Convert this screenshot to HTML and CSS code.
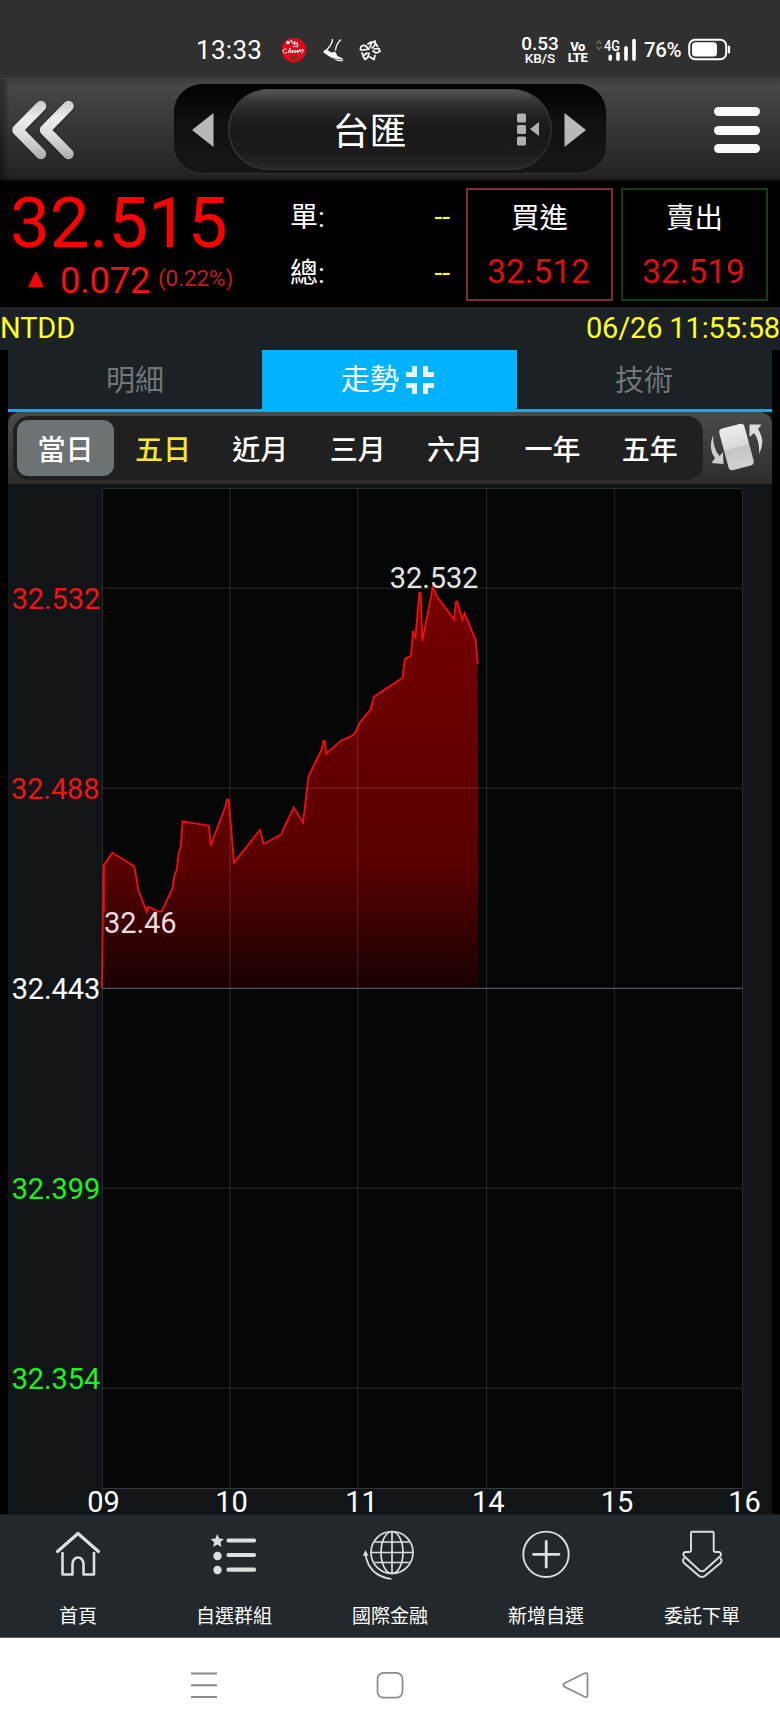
FILE: index.html
```html
<!DOCTYPE html>
<html lang="zh-Hant">
<head>
<meta charset="utf-8">
<title>台匯</title>
<link rel="stylesheet" href="styles.css">
</head>
<body>
<div class="statusbar">
  <span class="clock">13:33</span>
  <svg class="ic-badge" width="26" height="26" viewBox="0 0 26 26"><circle cx="13" cy="13" r="12.3" fill="#e1081c"/><path d="M9 4q2-2 2 1t3-1l-1 4q2-3 3-1M12 10q3-2 5 0M5.500 12Q1 12 2 15t4 0M7 16l2-5v5l2.500-3v3l2.500-3v3l2.500-3v3l2.500-4v3l3-3q1 3-2 5M16 5l1 4" fill="none" stroke="#fff" stroke-width="1"/><circle cx="7" cy="5.500" r="1.800" fill="#fff"/><rect x="10.500" y="18" width="6" height="4.500" fill="#6b3b16"/></svg>
  <svg class="ic-shoe" width="22" height="24" viewBox="0 0 22 24"><path d="M10.500 1Q10.500 6 5 11.500M19 1.500Q14 6 13.500 12.500" fill="none" stroke="#fff" stroke-width="1.300"/><path d="M4 11L1 14Q8 20 15 22.800L20 23.500Q22 22.500 20.500 20.500L15.500 18L13 13.500Q9 16 6.500 12.500Z" fill="#fff"/><path d="M1 15.500Q8 21 20.500 22" fill="none" stroke="#303030" stroke-width=".8"/></svg>
  <svg class="ic-fan" width="22" height="22" viewBox="0 0 22 22" fill="none" stroke="#fff" stroke-width="1.700" stroke-linejoin="round" stroke-linecap="round"><path d="M10 10L6 6.500Q1 6 1.500 11L5 11L10 10M11 8L12.500 4L16 2V6L13 9M15 10L20 9.500L21 12.500L17 14L14 12M8 14L4 17L6 20.500L9 18L10 14M11 18l4 2.500 1-4M9 5l3-2M17 5l1.500 2.500M3 14l1 2"/></svg>
  <div class="rate"><span class="rate-n">0.53</span><span class="rate-u">KB/S</span></div>
  <div class="volte"><span>Vo</span><span>LTE</span></div>
  <svg class="ic-signal" width="42" height="24" viewBox="0 0 42 24"><path d="M1.500 6L4 3l2.500 3M1.500 8.500L4 11.500l2.500-3" fill="none" stroke="#666" stroke-width="1.600"/><text x="9" y="12.500" class="fourg" textLength="16" lengthAdjust="spacingAndGlyphs">4G</text><path d="M15.200 18.200v3M23 15.500v5.700M31 9.700v11.500M39 2.500v18.700" stroke="#fff" stroke-width="3.600" stroke-linecap="round"/></svg>
  <span class="percent">76%</span>
  <svg class="ic-battery" width="43" height="23" viewBox="0 0 43 23"><rect x="1.200" y="1.700" width="37" height="19.500" rx="6" fill="none" stroke="#fff" stroke-width="2"/><rect x="4" y="4.300" width="25" height="14.300" rx="3.500" fill="#fff"/><path d="M41 8.500v6" stroke="#fff" stroke-width="2.200" stroke-linecap="round"/></svg>
</div>

<header class="header">
  <svg class="back" width="64" height="60" viewBox="0 0 64 60"><defs><linearGradient id="metal" x1="0" y1="0" x2="0" y2="60" gradientUnits="userSpaceOnUse"><stop offset="0" stop-color="#c8c8c8"/><stop offset=".3" stop-color="#ececec"/><stop offset=".6" stop-color="#dcdcdc"/><stop offset="1" stop-color="#aaa"/></linearGradient></defs><path d="M30 6L6.500 30L30 54M57.500 6L34 30L57.500 54" fill="none" stroke="url(#metal)" stroke-width="10.500" stroke-linecap="round" stroke-linejoin="round"/></svg>
  <div class="switcher">
    <svg width="22" height="34" viewBox="0 0 22 34"><path d="M0 17L21.500 0V34Z" fill="#b9b9b9"/></svg>
    <div class="pill">
      <span class="title">台匯</span>
      <svg class="dots" width="23" height="33" viewBox="0 0 23 33" fill="#b1b1b1"><rect width="9" height="9" rx="1.500" y=".5"/><rect width="9" height="9" rx="1.500" y="12"/><rect width="9" height="9" rx="1.500" y="23.500"/><path d="M13 16L22 9V23Z"/></svg>
    </div>
    <svg width="22" height="34" viewBox="0 0 22 34"><path d="M22 17L.5 0V34Z" fill="#b9b9b9"/></svg>
  </div>
  <div class="menu"><i></i><i></i><i></i></div>
</header>

<section class="quote">
  <div class="last">
    <div class="price">32.515</div>
    <div class="change"><svg width="16" height="16" viewBox="0 0 16 16"><path d="M8 0L16 16H0Z" fill="#f00"/></svg><span class="diff">0.072</span><span class="pct">(0.22%)</span></div>
  </div>
  <div class="volume">
    <div><span>單:</span><b>--</b></div>
    <div><span>總:</span><b>--</b></div>
  </div>
  <div class="side buy"><span>買進</span><em>32.512</em></div>
  <div class="side sell"><span>賣出</span><em>32.519</em></div>
</section>

<div class="info"><span>NTDD</span><span>06/26 11:55:58</span></div>

<main class="panel">
  <nav class="tabs">
    <div class="tab">明細</div>
    <div class="tab active">走勢<svg width="28" height="28" viewBox="0 0 28 28"><path d="M8.500 0V8.500H0M19.500 0V8.500H28M8.500 28V19.500H0M19.500 28V19.500H28" fill="none" stroke="#e9f8ff" stroke-width="5"/></svg></div>
    <div class="tab">技術</div>
  </nav>
  <div class="rangebar">
    <div class="ranges">
      <span class="on">當日</span><span class="yellow">五日</span><span>近月</span><span>三月</span><span>六月</span><span>一年</span><span>五年</span>
    </div>
    <svg class="rotate" width="54" height="52" viewBox="0 0 54 52"><defs><linearGradient id="card" x1="0" y1="0" x2="0" y2="1"><stop offset="0" stop-color="#eee"/><stop offset=".5" stop-color="#d8d8d8"/><stop offset=".52" stop-color="#c4c4c4"/><stop offset="1" stop-color="#d2d2d2"/></linearGradient></defs><rect x="14.500" y="4.500" width="26" height="43" rx="4" fill="url(#card)" transform="rotate(-15 27.500 26)"/><path d="M4 14Q-1 28 6 37L2.500 42L14.500 43L14 31L10.500 35Q4 28 4 14Z" fill="#ccc"/><path d="M40.500 3.500L52.500 3.500L49 8Q57 20 50 33Q51 20 45 12L40.500 16Z" fill="#ddd"/></svg>
  </div>
  <svg class="chart" width="764" height="1030" viewBox="8 484 764 1030">
    <defs><linearGradient id="area" x1="0" y1="80" x2="0" y2="1284" gradientUnits="userSpaceOnUse"><stop offset="0" stop-color="#760000"/><stop offset=".7" stop-color="#580000"/><stop offset="1" stop-color="#180203"/></linearGradient></defs>
    <rect x="102" y="488" width="641" height="1000" fill="#040606"/>
    <g transform="translate(90 560) scale(.33333)">
      <path fill="url(#area)" d="M36 1284L40 918L67 878L133 919L145 990L170 1055L175 1040L203 1054L215 1054L247 987L253 948L260 930L266 880L272 860L278 784L357 797L362 856L407 738L411 719L416 719L432 908L510 810L521 852L573 824L611 742L639 788L656 648L695 568L700 543L704 543L709 581L753 542L787 527L798 515L808 490L842 448L852 410L938 353L944 298L963 287L969 212L976 236L988 99L992 99L997 243L1029 80L1040 108L1092 178L1098 125L1102 125L1117 180L1124 160L1157 240L1163 312L1166 1284Z"/>
    </g>
    <path class="grid" d="M102.500 488.500H742.500V1488.500H102.500ZM230 488V1488M357.800 488V1488M486.500 488V1488M614.300 488V1488M102 588.200H742M102 788.200H742M102 1188.200H742M102 1388.200H742"/>
    <path d="M102 988.300H743" stroke="#4c5666" stroke-width="1.200"/>
    <g transform="translate(90 560) scale(.33333)">
      <path fill="none" stroke="#ee0e0e" stroke-width="5.500" d="M36 1284L40 918L67 878L133 919L145 990L170 1055L175 1040L203 1054L215 1054L247 987L253 948L260 930L266 880L272 860L278 784L357 797L362 856L407 738L411 719L416 719L432 908L510 810L521 852L573 824L611 742L639 788L656 648L695 568L700 543L704 543L709 581L753 542L787 527L798 515L808 490L842 448L852 410L938 353L944 298L963 287L969 212L976 236L988 99L992 99L997 243L1029 80L1040 108L1092 178L1098 125L1102 125L1117 180L1124 160L1157 240L1163 312"/>
      <path d="M42 918V1055" stroke="#ee0e0e" stroke-width="5"/>
    </g>
    <g class="axis">
      <g text-anchor="end">
        <text x="100.200" y="609" fill="#f01414">32.532</text>
        <text x="99.500" y="798.500" fill="#f01414">32.488</text>
        <text x="100.200" y="998.500" fill="#fff">32.443</text>
        <text x="100.200" y="1198.500" fill="#1ff01f">32.399</text>
        <text x="100.200" y="1388.500" fill="#1ff01f">32.354</text>
        <text x="478.300" y="588" fill="#e4e4e4">32.532</text>
      </g>
      <text x="104" y="933.300" fill="#ecdcdc">32.46</text>
      <g text-anchor="middle" fill="#fff">
        <text x="103.500" y="1512">09</text><text x="231.500" y="1512">10</text><text x="361.500" y="1512">11</text><text x="488.300" y="1512">14</text><text x="617" y="1512">15</text><text x="744.500" y="1512">16</text>
      </g>
    </g>
  </svg>
</main>

<nav class="bottom">
  <div class="item"><svg viewBox="0 0 50 50"><g fill="none" stroke="#dcdfe0" stroke-linejoin="round" stroke-linecap="round"><path d="M4.500 22.500L25 4.500L45.500 22.500" stroke-width="3.200"/><path d="M9.500 24V45.500H19.500V35A5.500 6.500 0 0 1 30.500 35V45.500H41V24" stroke-width="2.600"/></g></svg><span>首頁</span></div>
  <div class="item"><svg viewBox="0 0 50 50"><g fill="#dcdfe0"><path d="M8.300 5L10.200 9.500L15 10L11.400 13.200L12.500 18L8.300 15.500L4.100 18L5.200 13.200L1.600 10L6.400 9.500Z"/><circle cx="8.500" cy="27" r="4.200"/><circle cx="8.500" cy="41" r="4.200"/></g><path d="M19.500 11.500H45M19.500 26H45M19.500 40.700H45" stroke="#dcdfe0" stroke-width="4.200" stroke-linecap="round"/></svg><span>自選群組</span></div>
  <div class="item"><svg viewBox="0 0 50 50"><g fill="none" stroke="#dcdfe0" stroke-width="1.700"><circle cx="27" cy="23.500" r="21"/><ellipse cx="27" cy="23.500" rx="11" ry="21"/><path d="M27 2.500V44.500M6 23.500H48M9.500 13H44.500M9.500 33.500H44.500M.5 25.500Q4 47 26.500 50"/></g><path d="M.3 21L3.400 26.500L-2 27Z" fill="#dcdfe0"/></svg><span>國際金融</span></div>
  <div class="item"><svg viewBox="0 0 50 50"><circle cx="25" cy="25.300" r="22.700" fill="none" stroke="#dcdfe0" stroke-width="1.900"/><path d="M12.500 25.300H38M25.200 12.500V38" stroke="#dcdfe0" stroke-width="2.800" stroke-linecap="round"/></svg><span>新增自選</span></div>
  <div class="item"><svg viewBox="0 0 50 50"><g fill="none" stroke="#dcdfe0" stroke-width="1.900" stroke-linejoin="round"><path d="M15 2.700H35.500Q36.700 2.700 36.700 4V21.500Q36.700 23 38.500 23H42Q45 24 43.500 27L28 41Q25 43.500 22 41L7 27Q5 24 8.500 23H12Q14 23 14 21.500V4Q14 2.700 15 2.700Z"/><path d="M7 29Q5 32 7 34L21.500 46.500Q25 49.500 28.500 46.500L43.500 34Q45.500 32 43.500 29"/></g></svg><span>委託下單</span></div>
</nav>

<div class="sysbar">
  <svg width="28" height="28" viewBox="0 0 28 28"><path d="M1 2.500H27M1 14.300H27M1 26H27" stroke="#8a8a8a" stroke-width="2"/></svg>
  <svg width="28" height="28" viewBox="0 0 28 28"><rect x="1.500" y="1.800" width="25" height="24.800" rx="6" fill="none" stroke="#8a8a8a" stroke-width="1.700"/></svg>
  <svg width="28" height="28" viewBox="0 0 28 28"><path d="M2.500 12.300L22.500 2.300Q25.500 1.500 25.500 4V24Q25.500 27 22.500 25.800L2.500 15.700Q.2 14 2.500 12.300Z" fill="none" stroke="#8a8a8a" stroke-width="1.700"/></svg>
</div>
</body>
</html>
```

FILE: styles.css
```css
* { box-sizing: border-box; }
body { margin: 0; width: 780px; background: #000; color: #fff; font-family: Roboto, "Noto Sans CJK TC", sans-serif; }
svg { display: block; flex: none; }
.statusbar { height: 79px; background: linear-gradient(#303030 94%, #3b3b3b); display: flex; align-items: center; padding: 20px 48px 0 196px; }
.clock { font-size: 26px; letter-spacing: 0.3px; width: 85px; }
.ic-shoe { margin-left: 15px; }
.ic-fan { margin-left: 15px; }
.rate { margin-left: auto; width: 38px; display: flex; flex-direction: column; align-items: center; font-weight: 500; }
.rate-n { font-size: 19px; line-height: 15px; height: 14px; }
.rate-u { font-size: 13.500px; line-height: 16px; height: 14px; }
.volte { margin-left: 10px; width: 17px; display: flex; flex-direction: column; align-items: center; font-size: 13px; line-height: 12px; font-weight: 800; letter-spacing: -.5px; }
.volte span { line-height: 16px; height: 11px; }
.ic-signal { margin-left: 9px; }
.fourg { font-size: 14.500px; font-weight: 500; fill: #fff; }
.percent { font-size: 20.500px; font-weight: 500; letter-spacing: -.4px; margin: 0 6px 0 7px; width: 38px; white-space: nowrap; }
.ic-battery { margin-right: 1px; }

.header { height: 103px; background: linear-gradient(#404040 0, #474747 8%, #232323 94%, #151515 100%); display: flex; align-items: flex-start; padding: 5px 20px 0 11px; box-shadow: inset 9px 0 4px -3px rgba(0,0,0,.32), inset 0 -2px 0 #080808; }
.back { margin-top: 16px; filter: drop-shadow(0 1px 1px #222); }
.switcher { margin-left: 99px; width: 432px; height: 89px; border-radius: 28px; background: linear-gradient(#000, #101010 40%, #161616); display: flex; align-items: center; justify-content: space-between; padding: 2px 20px 0 18px; box-shadow: 0 1px 1px #333; }
.pill { width: 324px; height: 81px; border-radius: 41px; background: linear-gradient(#5a5a5a 0, #363636 15%, #202020 35%, #181818 55%, #1c1c1c 80%, #292929); display: flex; align-items: center; justify-content: flex-end; padding-right: 12px; margin-right: -1px; box-shadow: inset 1px 0 2px #444, inset -1px 0 2px #3a3a3a; }
.title { font-size: 37px; line-height: 54px; margin: 7px 110px 0 0; white-space: nowrap; }
.dots { margin-top: -1px; }
.menu { margin: 23px 0 0 auto; display: flex; flex-direction: column; gap: 9.500px; }
.menu i { display: block; width: 46px; height: 9px; border-radius: 5px; background: #fafafa; }

.quote { height: 125px; background: #000; display: flex; padding: 6px 12px 0 10px; }
.last { width: 280px; color: #f00; }
.price { font-size: 71px; line-height: 72px; letter-spacing: -0.1px; height: 70px; margin-top: -1px; }
.change { display: flex; align-items: baseline; padding-left: 18px; line-height: 48px; }
.change svg { margin-right: 16px; position: relative; top: -6px; }
.diff { font-size: 36.500px; color: #ef1414; width: 98px; letter-spacing: -.3px; }
.pct { font-size: 22.500px; color: #c81b1b; position: relative; top: -7px; letter-spacing: -.1px; }
.volume { width: 162px; padding: 2px 2px 0 0; font-size: 28px; }
.volume div { display: flex; justify-content: space-between; line-height: 56px; }
.volume b { font-weight: 400; color: #ffff2a; position: relative; top: -1px; }
.side { width: 147px; height: 113px; border: 2px solid #7a3030; display: flex; flex-direction: column; align-items: center; font-size: 28.500px; line-height: 57px; }
.side.buy { margin-left: 14px; }
.side.sell { border-color: #104010; margin-left: 8px; }
.side em { font-style: normal; font-size: 33.300px; line-height: 50px; color: #dc1010; margin-left: -2px; }

.info { height: 43px; background: #1b2125; color: #ffff27; display: flex; justify-content: space-between; font-size: 29px; line-height: 42px; letter-spacing: -.15px; }
.panel { margin: 0 8px; background: #111518; }
.tabs { height: 62px; display: flex; background: #1b2125; border-bottom: 3px solid #14aaf0; }
.tab { width: 254px; display: flex; align-items: center; justify-content: center; font-size: 29px; line-height: 56px; color: #71777a; padding-top: 2px; }
.tab.active { width: 255px; background: #00b2ff; color: #fff; height: 62px; gap: 7px; align-items: flex-start; padding: 2px 4px 0 0; }
.tab.active svg { margin-top: 14px; }
.rangebar { height: 72px; display: flex; background: linear-gradient(#4b4b4b, #2d2d2d); border-radius: 12px 12px 0 0; padding: 4px 9px 0 5px; justify-content: space-between; }
.ranges { width: 690px; height: 64px; border-radius: 16px; background: #202020; display: flex; padding: 4px 0 0 4px; gap: .4px; }
.ranges span { width: 97px; height: 56px; border-radius: 11px; text-align: center; font-size: 28px; line-height: 61px; font-weight: 500; }
.ranges .on { background: #6d7275; }
.ranges .yellow { color: #fae62a; }
.rotate { margin-top: 5px; }
.chart { overflow: visible; }
.chart .grid { fill: none; stroke: #fff; stroke-opacity: .15; stroke-width: 1; }
.axis { font-size: 29px; letter-spacing: -.1px; }
.bottom { height: 124px; background: #23282c; display: flex; border-top: 1px solid #15191c; border-bottom: 1px solid #596064; }
.item { width: 156px; display: flex; flex-direction: column; align-items: center; padding-top: 14px; }
.item svg { width: 50px; height: 50px; overflow: visible; }
.item span { font-size: 19px; line-height: 28px; margin-top: 24px; }
.sysbar { height: 95px; background: #fff; display: flex; justify-content: center; gap: 158px; padding-top: 33px; }
```
